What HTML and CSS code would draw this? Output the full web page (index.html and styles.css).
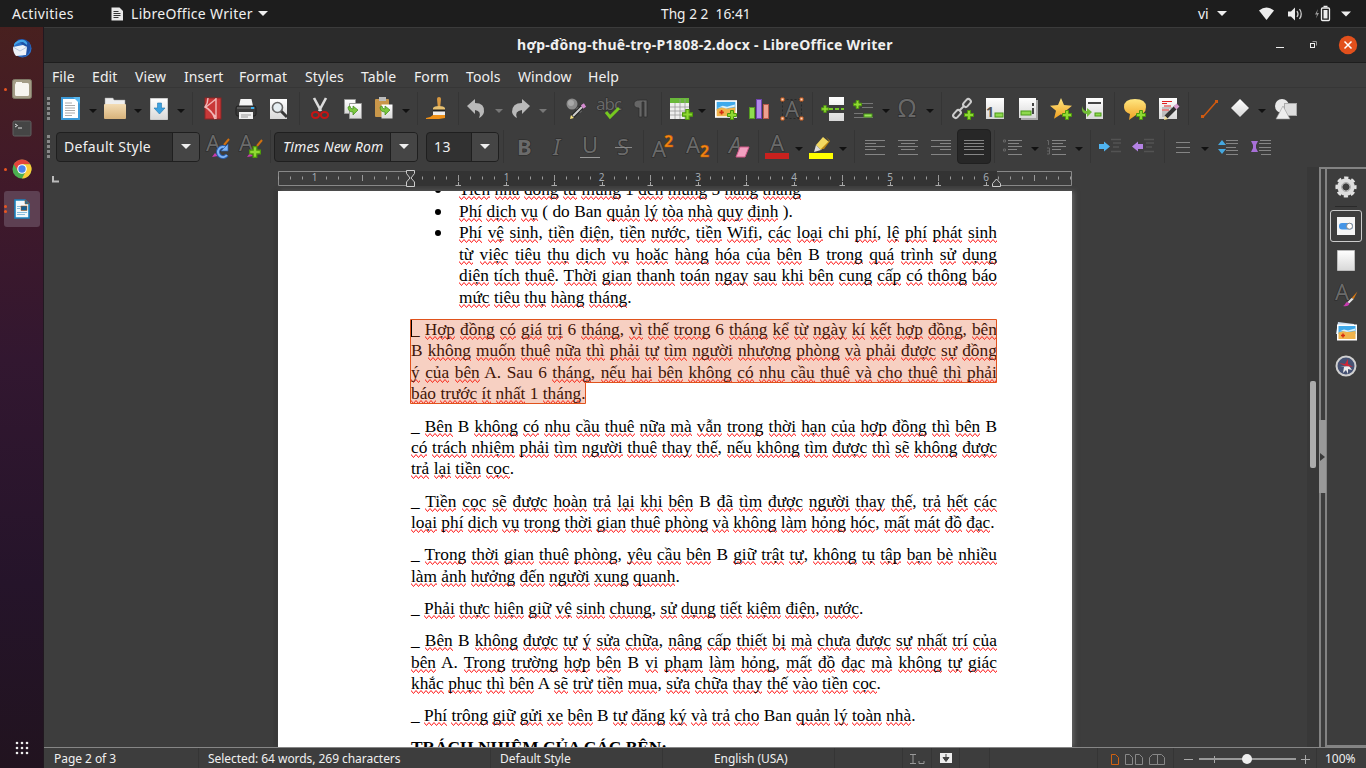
FILE: index.html
```html
<!DOCTYPE html>
<html lang="vi">
<head>
<meta charset="utf-8">
<title>hợp-đồng-thuê-trọ-P1808-2.docx - LibreOffice Writer</title>
<link rel="stylesheet" href="styles.css">
</head>
<body>
<svg width="0" height="0" class="defs">
  <defs>
    <linearGradient id="paper" x2="0" y2="1"><stop stop-color="#fff"/><stop offset="1" stop-color="#d8d8d8"/></linearGradient>
    <linearGradient id="gold" x2="0" y2="1"><stop stop-color="#ffe680"/><stop offset="1" stop-color="#f0a020"/></linearGradient>
    <linearGradient id="tan" x2="0" y2="1"><stop stop-color="#f3dcb4"/><stop offset="1" stop-color="#d7b27a"/></linearGradient>
    <symbol id="plus" viewBox="0 0 10 10"><path d="M3.5.5h3v3h3v3h-3v3h-3v-3h-3v-3h3z" fill="#8fd932" stroke="#4d9a0a"/></symbol>
    <symbol id="brush" viewBox="0 0 14 14"><path d="M13.5 0L8 6l2 1z" fill="#d97a14"/><path d="M8 6L4 10l2 1 4-4z" fill="#e4e4e4"/><path d="M4 10c-2 0-1 2-4 3.500 3 .5 6 0 6-2.500z" fill="#c83cb0"/></symbol>
    <symbol id="beach" viewBox="0 0 20 16"><rect width="20" height="16" fill="#fff"/><rect x="1.500" y="1.500" width="17" height="8" fill="#3fa9ea"/><path d="M1.500 8l5-1.500 5 1 7-1V14.500h-17z" fill="#f0b44c"/><path d="M2 7l5-2 4 1 7-2v2l-8 1.500-4-1z" fill="#d8f0fa"/><path d="M6 9v4M4 11h4" stroke="#d42c10" stroke-width="1.500"/></symbol>
    <pattern id="ticks" x="132" y="0" width="96" height="20" patternUnits="userSpaceOnUse"><path d="M12.500 6.500v3M24.500 6.500v3M36.500 6.500v3M48.500 5v6M60.500 6.500v3M72.500 6.500v3M84.500 6.500v3" stroke="#999"/></pattern>
    <pattern id="tabs" x="132" y="0" width="48" height="20" patternUnits="userSpaceOnUse"><path d="M46 15.500h4M0 15.500h3M.5 12v4M45.500 15.500h3" stroke="#aaa"/></pattern>
  </defs>
</svg>

<header class="topbar">
  <span class="activities">Activities</span>
  <svg class="appicon" width="12" height="14"><path d="M.5.5h8L12 4v9.500H.5z" fill="#e8e8e8"/><path d="M2.500 4.500h5M2.500 6.500h7M2.500 8.500h7M2.500 10.500h5" stroke="#333"/></svg>
  <span class="appname">LibreOffice Writer</span>
  <i class="tri light"></i>
  <span class="clock">Thg 2 2&nbsp; 16:41</span>
  <span class="lang">vi</span>
  <i class="tri light"></i>
  <svg class="tray" width="104" height="18">
    <path d="M0 5.500Q7.500-.5 15 5.500L7.500 15z" fill="#eee"/>
    <path d="M29 6.500h3l4-4v13l-4-4h-3z" fill="#eee"/><path d="M38 6q2 3 0 6M40.500 4q3.500 5 0 10" fill="none" stroke="#ccc" stroke-width="1.300"/>
    <path d="M59 4l-3 5.500h2l-1 4 3-5.500h-2z" fill="#999"/><rect x="62.500" y="3" width="8" height="12.500" rx="1" fill="none" stroke="#eee" stroke-width="1.300"/><path d="M64.500 1.500h4" stroke="#eee" stroke-width="1.500"/><rect x="64.500" y="5" width="4" height="8.500" fill="#eee"/>
    <path d="M82 6.500h10l-5 5z" fill="#eee"/>
  </svg>
</header>

<div class="desktop">
  <nav class="dock">
    <div class="launch"><svg width="22" height="22"><circle cx="11.500" cy="10.500" r="9" fill="#2a70c8"/><path d="M6 2q7-3 12 2 4 6-2 13-2 2-5 2 6-6 1-12z" fill="#1e50a4"/><path d="M3 6q4-5 10-4 4 2 3 5l-4-3q-5 0-9 4z" fill="#42a4e8"/><path d="M2 9l10-2 4 2-1 8-10 1q-3-3-3-9z" fill="#edf2f8"/><path d="M2 9l7 4 7-4" fill="none" stroke="#b8c8dc"/></svg></div>
    <div class="launch one"><svg width="20" height="20"><rect x=".5" y=".5" width="19" height="19" rx="2" fill="#a39c86" stroke="#7f7967"/><rect x="3" y="4" width="14" height="13" rx="1.500" fill="#f6f4ef"/><path d="M4 3h6v2H4z" fill="#f6f4ef"/></svg></div>
    <div class="launch"><svg width="20" height="18"><rect x="1" y="1" width="18" height="15" rx="1.500" fill="#454545" stroke="#606060"/><path d="M3 4l2.500 1.500L3 7M6 8h4" fill="none" stroke="#ddd"/></svg></div>
    <div class="launch one"><svg width="20" height="20" viewBox="-10 -10 20 20"><circle r="9.500" fill="#4caf50"/><path d="M-8.200-4.800A9.500 9.500 0 0 1 8.200-4.800H0L-4 2z" fill="#e5443b"/><path d="M8.200-4.800A9.500 9.500 0 0 1 0 9.500L4 2 0-4.800z" fill="#fccc38"/><circle r="4.800" fill="#fff"/><circle r="3.700" fill="#4a84ee"/></svg></div>
    <div class="launch two active"><svg width="16" height="20"><path d="M1 1h10l4 4v14H1z" fill="#f2f8fc" stroke="#1b83bf" stroke-width="1.600"/><path d="M11 1v4h4z" fill="#1570a8"/><path d="M3 7.500h4M3 9.500h3M3 13.500h10M3 15.500h8" stroke="#1b83bf"/><rect x="7" y="7" width="6" height="4.500" fill="#165f92"/></svg></div>
    <svg class="apps" width="14" height="14"><g fill="#eee"><circle cx="2" cy="2" r="1.300"/><circle cx="7" cy="2" r="1.300"/><circle cx="12" cy="2" r="1.300"/><circle cx="2" cy="7" r="1.300"/><circle cx="7" cy="7" r="1.300"/><circle cx="12" cy="7" r="1.300"/><circle cx="2" cy="12" r="1.300"/><circle cx="7" cy="12" r="1.300"/><circle cx="12" cy="12" r="1.300"/></g></svg>
  </nav>

  <main class="window">
    <div class="titlebar">
      <b>hợp-đồng-thuê-trọ-P1808-2.docx - LibreOffice Writer</b>
      <svg class="winctl" width="84" height="20"><path d="M1 12.500h8" stroke="#eee"/><path d="M37.500 6.500h4v4" fill="none" stroke="#999"/><rect x="35.500" y="8.500" width="4" height="4" fill="none" stroke="#eee"/><circle cx="73" cy="10" r="9.200" fill="#e2501c"/><path d="M69.500 6.500l7 7M76.500 6.500l-7 7" stroke="#fff" stroke-width="1.500"/></svg>
    </div>
    <nav class="menubar"><span>File</span><span>Edit</span><span>View</span><span>Insert</span><span>Format</span><span>Styles</span><span>Table</span><span>Form</span><span>Tools</span><span>Window</span><span>Help</span></nav>

    <div class="toolbar standard">
      <i class="grip"></i>
      <svg class="ic"><rect x="3" y="1" width="17" height="21" fill="#fff" stroke="#3c9ad8" stroke-width="2"/><path d="M14 0h7v7z" fill="#58b8f0"/><path d="M6 6h7M6 8.500h10M6 11h10M6 13.500h10M6 16h10M6 18.500h7" stroke="#aaa"/></svg>
      <i class="tri"></i>
      <svg class="ic"><path d="M2 4V1h8l1 2h11v6H2z" fill="#eee" stroke="#999" stroke-width=".5"/><rect x="1" y="7" width="22" height="15" rx="1" fill="url(#tan)"/></svg>
      <i class="tri"></i>
      <svg class="ic"><path d="M3.500 1.500h17v21h-17z" fill="url(#paper)" stroke="#ccc"/><path d="M10.500 6h4v5h3.500l-5.500 6-5.500-6h3.500z" fill="#3ea2e0" stroke="#2478b0" stroke-width=".6"/></svg>
      <i class="tri"></i><i class="sep"></i>
      <svg class="ic"><rect x="4" y="1" width="16" height="21" fill="#c93838" stroke="#8e2424"/><path d="M7 1q0 5-3 9 7 3 10 12M15 1v21M15 2L5 10l10 10" stroke="#f0b8b8" fill="none" stroke-width="1.400"/></svg>
      <svg class="ic"><path d="M5 9L6.500 2h11L19 9z" fill="#f4f4f4"/><rect x="2" y="9" width="20" height="10" rx="2" fill="#3a3a3a" stroke="#202020"/><path d="M3 11h18" stroke="#777"/><rect x="17" y="10" width="3" height="2" fill="#38b0f0"/><path d="M5 15h14v7H5z" fill="#f0f0f0"/><path d="M7 18h10M7 20h7" stroke="#999"/></svg>
      <svg class="ic"><rect x="3" y="2" width="17" height="20" fill="url(#paper)"/><path d="M14 14l6 6" stroke="#383838" stroke-width="3"/><circle cx="10.500" cy="10.500" r="5" fill="#e6eef2" stroke="#666" stroke-width="1.600"/></svg>
      <i class="sep"></i>
      <svg class="ic"><path d="M6 1l7 13M18 1l-7 13" stroke="#dcdcdc" stroke-width="2.600"/><ellipse cx="7.500" cy="18" rx="3.600" ry="3" fill="none" stroke="#c41414" stroke-width="2"/><ellipse cx="16.500" cy="18" rx="3.600" ry="3" fill="none" stroke="#c41414" stroke-width="2"/></svg>
      <svg class="ic"><g fill="url(#paper)" stroke="#999"><path d="M3.500 2.500h11v14h-11z"/><path d="M8.500 6.500h12v15h-12z"/></g><path d="M7 10q0 5 5 5v3l5-5-5-4v3q-3 0-3-3z" fill="#7cc840" stroke="#3f8a18" stroke-width=".7"/></svg>
      <svg class="ic"><rect x="3" y="2" width="14" height="18" rx="1" fill="#c9974a"/><rect x="7" y="0" width="7" height="4" fill="#bbb"/><path d="M9.500 7.500h11v14h-11z" fill="url(#paper)"/><path d="M8 10q0 5 5 5v3l5-5-5-4v3q-3 0-3-3z" fill="#7cc840" stroke="#3f8a18" stroke-width=".7"/></svg>
      <i class="tri"></i><i class="sep"></i>
      <svg class="ic"><path d="M13 0q2 0 2 2l-.8 8h-2.400L11 2q0-2 2-2z" fill="#d89840"/><path d="M7 11q1-2 6-2t6 2v2H7z" fill="#e6c070"/><path d="M7 12.500h12v2H7z" fill="#222"/><path d="M7 14.500h12v4H7z" fill="#eee"/><path d="M0 21q4 0 7-3h12v3l-6 1H0z" fill="#ee9018"/></svg>
      <i class="sep"></i>
      <svg class="ic"><path d="M3 9l8-7v4q10 0 9 9-1 4-5 6 3-7-4-8v4z" fill="#b9b9b9"/></svg>
      <i class="tri dim"></i>
      <svg class="ic"><path d="M21 9l-8-7v4Q3 6 3 15q1 4 5 6-3-7 5-8v4z" fill="#b9b9b9"/></svg>
      <i class="tri dim"></i><i class="sep"></i>
      <svg class="ic"><circle cx="7" cy="7" r="5.500" fill="#8b8b8b"/><circle cx="6" cy="6" r="3" fill="#a8a8a8"/><path d="M12 11l4 4" stroke="#777" stroke-width="3"/><path d="M7 20L18 9" stroke="#222" stroke-width="4"/><path d="M8 19L17 10" stroke="#ccc" stroke-width="2"/><path d="M17 10l3-2" stroke="#d48ad0" stroke-width="4"/><path d="M5 22l1-4 3 3z" fill="#f4e080"/></svg>
      <svg class="ic"><text x="-1" y="13" class="abc">abc</text><path d="M9 15l4 5 9-9" fill="none" stroke="#76c820" stroke-width="3"/></svg>
      <svg class="ic"><path d="M18 3v17h-3V5h-2v15h-3v-9Q5 11 5 7t6-4z" fill="#666" stroke="#2c2c2c" stroke-width=".7"/></svg>
      <i class="sep"></i>
      <svg class="ic"><rect x="1" y="2" width="19" height="20" fill="#eee"/><rect x="1" y="1" width="19" height="5" fill="#69b83a"/><path d="M1 10h19M1 14h19M1 18h19M6 6v16M11 2v20M16 2v20" stroke="#999" stroke-width=".8"/><use href="#plus" x="13" y="12" width="11" height="11"/></svg>
      <i class="tri"></i>
      <svg class="ic"><use href="#beach" x="1" y="3" width="22" height="18"/><use href="#plus" x="13" y="13" width="10" height="10"/></svg>
      <svg class="ic"><rect x="2.500" y="10.500" width="5" height="11" fill="#90dc50" stroke="#559b20"/><rect x="9.500" y="2.500" width="5" height="19" fill="#b28ae8" stroke="#7044b0"/><rect x="16.500" y="7.500" width="5" height="14" fill="#eca090" stroke="#b85848"/></svg>
      <svg class="ic"><rect x="2.500" y="2.500" width="19" height="19" fill="none" stroke="#292929" stroke-dasharray="2 2"/><text x="5" y="20" class="glyph">A</text><g fill="#ffd8c0" stroke="#d06020"><path d="M1 1h3v3H1zM20 1h3v3h-3zM1 20h3v3H1zM20 20h3v3h-3z"/></g></svg>
      <i class="sep"></i>
      <svg class="ic"><path d="M8 0h15v8H8zM8 16h15v8H8z" fill="url(#paper)"/><path d="M8 12h15" stroke="#76c828" stroke-width="2" stroke-dasharray="4 2"/><use href="#plus" x="0" y="8" width="8" height="8"/></svg>
      <svg class="ic"><path d="M10 6.500h11M10 10.500h11M2 16.500h9M2 20.500h19" stroke="#777"/><rect x="12" y="17" width="8" height="3" fill="#9be35a" stroke="#4b9a18"/><use href="#plus" x="1" y="3" width="9" height="9"/></svg>
      <i class="tri"></i>
      <svg class="ic"><text x="2" y="20" class="omega">Ω</text></svg>
      <i class="tri"></i><i class="sep"></i>
      <svg class="ic"><g fill="none" stroke="#ccc" stroke-width="2"><rect x="-2.500" y="-4.500" width="5" height="9" rx="2.500" transform="translate(16 6)rotate(42)"/><rect x="-2.500" y="-4.500" width="5" height="9" rx="2.500" transform="translate(6 17)rotate(42)"/><path d="M8 14l5-5"/></g><use href="#plus" x="13" y="13" width="10" height="10"/></svg>
      <svg class="ic"><path d="M3 1h18v21H3z" fill="url(#paper)"/><text x="3" y="20" class="foot">1</text><rect x="12" y="16" width="8" height="4" fill="#8fd94e" stroke="#4b9a18"/></svg>
      <svg class="ic"><path d="M5 3h17v20H5z" fill="#aaa"/><path d="M3 1h17v20H3z" fill="url(#paper)"/><rect x="5" y="14" width="10" height="4" fill="#8fd94e" stroke="#4b9a18"/><path d="M17 6v3M17 11v6" stroke="#444" stroke-width="2"/></svg>
      <svg class="ic"><path d="M12 1l3 7 8 .8-6 5 2 8-7-4.500-7 4.500 2-8-6-5L9 8z" fill="url(#gold)"/><use href="#plus" x="13" y="13" width="10" height="10"/></svg>
      <svg class="ic"><path d="M4 1h17v21H4z" fill="url(#paper)"/><path d="M6 6h13" stroke="#444" stroke-width="2"/><path d="M0 9q1 5 5 5v-3l5 4-5 5v-3q-6 0-5-8z" fill="#71bd36"/><rect x="13" y="16" width="6" height="3" fill="#8fd94e" stroke="#4b9a18"/></svg>
      <i class="sep"></i>
      <svg class="ic"><path d="M12 2q11 0 11 8t-10 8l-7 5 1-6q-6-2-6-7 0-8 11-8z" fill="url(#gold)"/><use href="#plus" x="13" y="13" width="10" height="10"/></svg>
      <svg class="ic"><path d="M2 1h18v21H2z" fill="url(#paper)"/><path d="M5 4.500h10M5 6.500h5M7 9h7M5 13h7" stroke="#e02020"/><path d="M5 11h10M5 15h8M5 17h5M5 19h4" stroke="#999"/><path d="M9 20l10-10" stroke="#333" stroke-width="4"/><path d="M18 11l3-3" stroke="#d8a0d0" stroke-width="4"/><path d="M7 23l1-4 3 3z" fill="#f2df94"/></svg>
      <i class="sep"></i>
      <svg class="ic"><path d="M5 20L19 4" stroke="#d05a10" stroke-width="1.500"/><path d="M3 18h3v3H3zM17 3h3v3h-3z" fill="#d05a10"/></svg>
      <svg class="ic"><path d="M12 2l9 9-9 9-9-9z" fill="url(#paper)"/></svg>
      <i class="tri"></i>
      <svg class="ic"><circle cx="8" cy="9" r="7" fill="#e8e8e8"/><rect x="10.500" y="6.500" width="12" height="12" fill="#ddd" stroke="#aaa"/><path d="M9 9l7 13H2z" fill="#eee" stroke="#999" stroke-width=".6"/></svg>
    </div>

    <div class="toolbar formatting">
      <i class="grip"></i>
      <div class="combo wide style"><span>Default Style</span><i><b class="tri light"></b></i></div>
      <svg class="ic"><text x="0" y="16" class="glyph">A</text><path d="M23 4l-5 6" stroke="#d07010" stroke-width="2"/><path d="M6 22l3-4 3 3z" fill="#c83cb0"/><path d="M20 13a5 5 0 1 0 1 7" fill="none" stroke="#2c5fae" stroke-width="4"/><path d="M20 13a5 5 0 1 0 1 7" fill="none" stroke="#7fb4f4" stroke-width="2"/><path d="M15 16h7V9z" fill="#7fb4f4" stroke="#2c5fae" stroke-width=".7"/></svg>
      <svg class="ic"><text x="0" y="16" class="glyph">A</text><path d="M23 5l-5 6" stroke="#d07010" stroke-width="2"/><path d="M8 22l3-4 3 3z" fill="#c83cb0"/><use href="#plus" x="10" y="11" width="12" height="12"/></svg>
      <i class="sep"></i>
      <div class="combo wide font"><span>Times New Roman</span><i><b class="tri light"></b></i></div>
      <div class="combo size"><span>13</span><i><b class="tri light"></b></i></div>
      <i class="sep"></i>
      <svg class="ic"><text x="5" y="20" class="glyph bold">B</text></svg>
      <svg class="ic"><text x="8" y="20" class="glyph ital">I</text></svg>
      <svg class="ic"><text x="4" y="18" class="glyph">U</text><path d="M2 22.500h20" stroke="#999"/></svg>
      <svg class="ic"><text x="6" y="20" class="glyph">S</text><path d="M4 12.500h17" stroke="#888"/></svg>
      <i class="sep"></i>
      <svg class="ic"><text x="1" y="22" class="glyph">A</text><text x="13" y="12" class="two">2</text></svg>
      <svg class="ic"><text x="0" y="18" class="glyph">A</text><text x="14" y="22" class="two">2</text></svg>
      <i class="sep"></i>
      <svg class="ic"><text x="2" y="18" class="glyph ital">A</text><path d="M13 12h9l-4 10H9z" fill="#f2a0c0" stroke="#d05888"/></svg>
      <i class="sep"></i>
      <svg class="ic"><text x="5" y="16" class="glyph">A</text><path d="M0 18h24v6H0z" fill="#c9211e"/></svg>
      <i class="tri"></i>
      <svg class="ic"><path d="M7 10L14 2l6 5-8 8z" fill="#f2d860"/><path d="M17 2l3 4-8 8 3 0 6-8z" fill="#b98512"/><path d="M7 10l5 5-7 2z" fill="#ddd"/><path d="M0 18h24v6H0z" fill="#ff0"/></svg>
      <i class="tri"></i><i class="sep"></i>
      <svg class="ic"><path d="M2 5.500h20M2 8.500h11M2 11.500h20M2 14.500h11M2 19.500h20" class="ln"/></svg>
      <svg class="ic"><path d="M2 5.500h20M5 8.500h14M2 11.500h20M5 14.500h14M2 19.500h20" class="ln"/></svg>
      <svg class="ic"><path d="M2 5.500h20M11 8.500h11M2 11.500h20M11 14.500h11M2 19.500h20" class="ln"/></svg>
      <div class="pressed"><svg class="ic"><path d="M2 5.500h20M2 8.500h20M2 11.500h20M2 14.500h20M2 19.500h20" class="ln"/></svg></div>
      <i class="sep"></i>
      <svg class="ic"><path d="M8 5.500h14M8 8.500h11M8 11.500h14M8 14.500h9M8 19.500h14" class="ln"/><path d="M3.500 5h2v2h-2zM3.500 14h2v2h-2z" class="ln dark"/></svg>
      <i class="tri"></i>
      <svg class="ic"><path d="M8 5.500h14M8 8.500h11M8 11.500h14M8 14.500h9M8 19.500h14" class="ln"/><path d="M3 5.500h1.500V10M3 13h2.500v6H3M3 16h2" class="ln dark"/></svg>
      <i class="tri"></i><i class="sep"></i>
      <svg class="ic"><path d="M12 4.500h10M14 8h8M14 12h6M12 16.500h10" stroke="#535353" stroke-width="1.500"/><path d="M0 9h5V6.500l6 5-6 5V14H0z" fill="#50b4f0"/></svg>
      <svg class="ic"><path d="M12 4.500h10M14 8h8M14 12h6M12 16.500h10" stroke="#535353" stroke-width="1.500"/><path d="M11 9H6V6.500l-6 5 6 5V14h5z" fill="#b482e4"/></svg>
      <i class="sep"></i>
      <svg class="ic"><path d="M5 7.500h14M5 12.500h14M5 17.500h14" class="ln"/></svg>
      <i class="tri"></i>
      <svg class="ic"><path d="M10 5.500h12M10 8.500h12M10 12.500h10M10 15.500h12M10 19.500h12" class="ln"/><path d="M6 5l4 5H2zM6 19l4-5H2z" fill="#45a8e0"/></svg>
      <svg class="ic"><path d="M11 5.500h11M10 8.500h12M10 12.500h12M10 15.500h12M12 19.500h10" class="ln"/><path d="M2 6h7l-2 4v3l2 4H2l2-4v-3z" fill="#a870d8"/></svg>
    </div>

    <section class="workspace">
      <div class="canvas">
        <div class="rulerrow">
          <svg width="9" height="7" class="tabsel"><path d="M1 0v5.500h6" fill="none" stroke="#bbb" stroke-width="2"/></svg>
          <svg class="ruler" width="796" height="20">
            <rect x="132" y="1" width="587" height="15" fill="#333"/>
            <path d="M132 1.500H.5v14H132M719 1.500h74.500v14H719" fill="none" stroke="#888"/>
            <rect x="0" y="0" width="794" height="20" fill="url(#ticks)"/>
            <rect x="150" y="0" width="564" height="20" fill="url(#tabs)"/>
            <g class="nums"><text x="36.500" y="11">1</text><text x="228.500" y="11">1</text><text x="323.500" y="11">2</text><text x="420" y="11">3</text><text x="516" y="11">4</text><text x="612" y="11">5</text><text x="708" y="11">6</text></g>
            <path d="M128.500.5h8v3L133 8l3.500 4v4.500h-8V12L132 8l-3.500-4.500z" fill="#3d3d3d" stroke="#ccc"/>
            <path d="M714.500 16.500v-3l4-4.500 4 4.500v3z" fill="#3d3d3d" stroke="#ccc"/>
          </svg>
        </div>
        <article class="page" id="page">
          <ul>
            <li><p class="last">Tiền nhà đóng từ mùng 1 đến mùng 5 hàng tháng</p></li>
            <li><p class="last">Phí dịch vụ ( do Ban quản lý tòa nhà quy định ).</p></li>
            <li><p>Phí vệ sinh, tiền điện, tiền nước, tiền Wifi, các loại chi phí, lệ phí phát sinh</p>
              <p>từ việc tiêu thụ dịch vụ hoặc hàng hóa của bên B trong quá trình sử dụng</p>
              <p>diện tích thuê. Thời gian thanh toán ngay sau khi bên cung cấp có thông báo</p>
              <p class="last">mức tiêu thụ hàng tháng.</p></li>
          </ul>
          <div class="para selected">
            <p>_ Hợp đồng có giá trị 6 tháng, vì thế trong 6 tháng kể từ ngày kí kết hợp đồng, bên</p>
            <p>B không muốn thuê nữa thì phải tự tìm người nhượng phòng và phải được sự đồng</p>
            <p>ý của bên A. Sau 6 tháng, nếu hai bên không có nhu cầu thuê và cho thuê thì phải</p>
            <p class="last">báo trước ít nhất 1 tháng.</p>
            <svg class="selection" width="588" height="86"><path d="M.5.500h586v63H175.500v21H.5z"/><path d="M1.500 1v17" class="caret"/></svg>
          </div>
          <div class="para">
            <p>_ Bên B không có nhu cầu thuê nữa mà vẫn trong thời hạn của hợp đồng thì bên B</p>
            <p>có trách nhiệm phải tìm người thuê thay thế, nếu không tìm được thì sẽ không được</p>
            <p class="last">trả lại tiền cọc.</p>
          </div>
          <div class="para">
            <p>_ Tiền cọc sẽ được hoàn trả lại khi bên B đã tìm được người thay thế, trả hết các</p>
            <p class="last">loại phí dịch vụ trong thời gian thuê phòng và không làm hỏng hóc, mất mát đồ đạc.</p>
          </div>
          <div class="para">
            <p>_ Trong thời gian thuê phòng, yêu cầu bên B giữ trật tự, không tụ tập bạn bè nhiều</p>
            <p class="last">làm ảnh hưởng đến người xung quanh.</p>
          </div>
          <div class="para"><p class="last">_ Phải thực hiện giữ vệ sinh chung, sử dụng tiết kiệm điện, nước.</p></div>
          <div class="para">
            <p>_ Bên B không được tự ý sửa chữa, nâng cấp thiết bị mà chưa được sự nhất trí của</p>
            <p>bên A. Trong trường hợp bên B vi phạm làm hỏng, mất đồ đạc mà không tự giác</p>
            <p class="last loose">khắc phục thì bên A sẽ trừ tiền mua, sửa chữa thay thế vào tiền cọc.</p>
          </div>
          <div class="para"><p class="last">_ Phí trông giữ gửi xe bên B tự đăng ký và trả cho Ban quản lý toàn nhà.</p></div>
          <div class="para"><p class="last heading">TRÁCH NHIỆM CỦA CÁC BÊN:</p></div>
        </article>
      </div>
      <div class="scroll"><i></i></div>
      <div class="splitter"><i><b></b></i></div>
      <aside class="sidebar">
        <svg width="24" height="24" viewBox="-12 -12 24 24"><circle r="8.800" fill="none" stroke="#e2e2e2" stroke-width="3.600" stroke-dasharray="4 2.910" stroke-dashoffset="2"/><circle r="6.200" fill="none" stroke="#ddd" stroke-width="5"/><circle r="4.500" fill="none" stroke="#aaa" stroke-width="1"/></svg>
        <hr>
        <div class="tabon"><svg width="20" height="20"><path d="M1 1h18v18H1z" fill="#f5f5f5"/><rect x="3" y="7" width="14" height="6.500" rx="3" fill="#4595e6"/><circle cx="13.500" cy="10.200" r="3" fill="#fff" stroke="#888"/></svg></div>
        <svg width="24" height="24"><path d="M3.500 1.500h17v20h-17z" fill="url(#paper)" stroke="#bbb"/></svg>
        <svg width="24" height="24"><text x="1" y="16" class="glyph">A</text><use href="#brush" x="9" y="7" width="15" height="16"/></svg>
        <svg width="24" height="24"><path d="M4 3l16 2v10H2z" fill="#cde"/><use href="#beach" x="3" y="5" width="20" height="17"/></svg>
        <svg width="24" height="24" viewBox="-12 -12 24 24"><circle r="9.500" fill="#465273" stroke="#d0d0d0" stroke-width="2"/><path d="M-6 1l4 0-1 6 3-3 2 4 0-5 4 1-3-4z" fill="#eee"/><path d="M-7-3l6 1 3-5 0 5 5 3-7-1-3-1z" fill="#d02838"/></svg>
      </aside>
    </section>

    <footer class="status">
      <span class="s1">Page 2 of 3</span><span class="s2">Selected: 64 words, 269 characters</span><span class="s3">Default Style</span><span class="s4">English (USA)</span>
      <span></span>
      <span><svg width="24" height="14"><path d="M7 2.500h6M7 11.500h6M10 3v9M16 9v2.500h5V9" fill="none" stroke="#999"/></svg></span>
      <span><svg width="24" height="14"><rect x="8" y="1" width="12" height="10" fill="#eee"/><path d="M14 2v5M11 5.500l3 4 3-4z" fill="#444" stroke="#444"/></svg></span>
      <span></span><span></span>
      <span><svg width="70" height="16"><path d="M13.500 3.500h4l3 3v7h-7z" fill="none" stroke="#d06010"/><path d="M27.500 3.500h4l3 3v7h-7zM37.500 3.500h4l3 3v7h-7zM59.500 13.500h-8v-7l3-3h5zv-10h4l3 3v7z" fill="none" stroke="#888"/></svg></span>
      <span><svg width="138" height="16"><path d="M10 8.500h9M127 8.500h9M131.500 4v9M40.500 5v7" stroke="#aaa"/><path d="M25 8h97" stroke="#999" stroke-width="2"/><circle cx="73" cy="8" r="5" fill="#eee"/></svg></span>
      <span class="s5">100%</span>
    </footer>
  </main>
</div>
<script src="spell.js"></script>
</body>
</html>
```
FILE: styles.css
```css
* { box-sizing: border-box; }
body { margin: 0; width: 1366px; height: 768px; overflow: hidden; background: #3d3d3d; color: #f0f0f0; font-family: "Noto Sans", sans-serif; font-size: 14px; }
i { font-style: normal; }
svg { display: block; flex: none; }
.defs { position: absolute; }

.topbar { display: flex; align-items: center; height: 27px; padding-left: 12px; background: #1d1d1d; line-height: 27px; white-space: nowrap; }
.activities { width: 99px; letter-spacing: .35px; }
.appname { width: 121px; margin-left: 8px; letter-spacing: .3px; }
.topbar .tri { margin-left: 6px; }
.clock { width: 92px; margin-left: 393px; font-size: 13.700px; letter-spacing: .02px; }
.lang { width: 12px; margin-left: 445px; }
.topbar .lang + .tri { margin-left: 7px; }
.tray { margin-left: 32px; }

.tri { width: 0; height: 0; border: 4px solid transparent; border-width: 4px 4px 0; border-top-color: #111; }
.tri.dim { border-top-color: #777; }
.tri.light { border-width: 5px 5px 0; border-top-color: #eee; }

.desktop { display: flex; height: 741px; }
.dock { width: 44px; height: 741px; padding: 4px 4px 13px; display: flex; flex-direction: column; align-items: center; gap: 4px; background: linear-gradient(#48201f, #40192a 22%, #321730 45%, #25142a 75%, #21131f); border-right: 1px solid #211820; }
.launch { position: relative; width: 36px; height: 36px; flex: none; display: grid; place-items: center; border-radius: 3px; }
.launch.active { background: #5d4052; }
.launch.one::before, .launch.two::before { content: ""; position: absolute; left: 0; top: 16.500px; width: 3px; height: 3px; border-radius: 50%; background: #e95420; }
.launch.two::before { top: 14px; box-shadow: 0 5px #e95420; }
.apps { margin-top: auto; }

.window { width: 1322px; height: 741px; display: flex; flex-direction: column; border-top: 1px solid #3b3b3b; }
.titlebar { height: 36px; display: flex; align-items: center; background: #2b2b2b; border-bottom: 1px solid #1e1e1e; }
.titlebar b { margin: -2px 0 0 473px; width: 380px; font-size: 14px; letter-spacing: .28px; white-space: nowrap; }
.winctl { margin-left: 378px; }
.menubar { height: 25px; padding-left: 8px; display: grid; grid-template-columns: 40px 43px 49px 55px 66px 56px 53px 52px 52px 70px auto; line-height: 28px; letter-spacing: .1px; border-bottom: 1px solid #363636; }

.toolbar { display: grid; padding-left: 3px; align-items: center; flex: none; }
.standard { height: 38px; padding-top: 3px; grid-template-columns: 12px 30px 14px 31px 13px 30px 15px 9px 33px 33px 32px 9px 33px 31px 30px 15px 9px 32px 6px 31px 14px 30px 15px 11px 32px 32px 32px 8px 29px 16px 33px 33px 32px 9px 31px 30px 14px 30px 15px 10px 32px 33px 33px 33px 32px 9px 34px 31px 10px 30px 30px 16px auto; }
.formatting { height: 41px; grid-template-columns: 9px 150px 33px 31px 4px 152px 77px 9px 33px 33px 33px 32px 8px 35px 31px 10px 31px 7px 30px 14px 30px 15px 9px 33px 33px 28px 37px 6px 31px 13px 31px 15px 9px 33px 32px 7px 30px 15px 33px auto; }
.toolbar > .tri { margin-top: 4px; }
.ic { width: 24px; height: 24px; overflow: visible; }
.formatting > .ic { margin-top: 1px; }
.sep { width: 1px; height: 33px; background: #353535; }
.grip { width: 3px; height: 23px; background: repeating-linear-gradient(#8a8a8a 0 3px, transparent 3px 5px); }
.combo { display: flex; height: 30px; border: 1px solid #1f1f1f; border-radius: 4px; background: #313131; overflow: hidden; line-height: 28px; }
.combo.wide { width: 144px; }
.combo.size { width: 73px; }
.combo span { flex: 1; min-width: 0; overflow: hidden; white-space: nowrap; margin-left: 7px; }
.combo > i { width: 27px; display: grid; place-items: center; border-left: 1px solid #1f1f1f; background: #454545; }
.combo.font span { font-style: italic; font-size: 14px; letter-spacing: .18px; margin: 0 6px 0 8px; }
.combo.style span { letter-spacing: .3px; }
.combo.size span { letter-spacing: .4px; }
.pressed { width: 34px; height: 35px; display: grid; place-items: center; border: 1px solid #202020; border-radius: 4px; background: #272727; }
.ln { stroke: #858585; fill: none; }
.ln.dark { stroke: #666; }
.glyph { font: 22px "Noto Sans", sans-serif; fill: #6a6a6a; stroke: #282828; stroke-width: 1.200px; paint-order: stroke; }
.glyph.bold { font-weight: bold; }
.glyph.ital { font-style: italic; }
.abc { font: 17px "Noto Sans", sans-serif; letter-spacing: -1px; fill: #686868; stroke: #2a2a2a; stroke-width: 1px; paint-order: stroke; }
.omega { font: 25px "Noto Sans", sans-serif; fill: #686868; stroke: #2a2a2a; stroke-width: 1.200px; paint-order: stroke; }
.foot { font: bold 14px "Noto Sans", sans-serif; fill: #555; }
.two { font: bold 16px "Noto Sans", sans-serif; fill: #f68a14; stroke: #b65000; stroke-width: .5px; }

.workspace { height: 580px; flex: none; display: flex; }
.canvas { width: 1263px; height: 580px; overflow: hidden; }
.rulerrow { height: 24px; display: flex; padding-top: 3px; }
.tabsel { margin: 6px 0 0 8px; }
.ruler { margin-left: 217px; }
.nums { font: 10px "Noto Sans", sans-serif; fill: #a4acb4; text-anchor: middle; }
.page { width: 794px; height: 556px; margin-left: 234px; padding: 0 75px 0 133px; overflow: hidden; background: #fff; color: #000; box-shadow: 2px 0 5px #686868, -2px 0 4px #303030; font-family: "Liberation Serif", serif; font-size: 17.330px; }
.page ul { list-style: none; margin: -11.700px 0 10.700px; padding: 0 0 0 48px; }
.page li { position: relative; }
.page li::before { content: ""; position: absolute; left: -24px; top: 8px; width: 6px; height: 6px; border-radius: 50%; background: #000; }
.page p { margin: 0; height: 21.490px; line-height: 21.490px; white-space: nowrap; text-align: justify; text-align-last: justify; }
.page p.last { text-align-last: left; }
.page p.loose { word-spacing: .15px; }
.page p.heading { font-weight: bold; }
.para { position: relative; margin-bottom: 10.680px; }
.miss { padding-bottom: 1px; background: url("data:image/svg+xml,%3Csvg xmlns='http://www.w3.org/2000/svg' width='5' height='4'%3E%3Cpath d='M-2.500 3.500L0 .5 2.500 3.500 5 .5 7.500 3.500' fill='none' stroke='%23f00' stroke-width='.9'/%3E%3C/svg%3E") repeat-x left bottom; }
.selection { position: absolute; left: -1px; top: 0; fill: rgba(224, 82, 28, .27); stroke: #e0521c; }
.selection .caret { stroke: #000; }

.scroll { width: 12px; padding: 214px 0 0 3px; background: #383838; }
.scroll i { display: block; width: 6px; height: 87px; border-radius: 2px; background: #acacac; }
.splitter { width: 8px; padding-top: 251px; border: solid #838383; border-width: 2px 2px 0; }
.splitter i { display: grid; place-items: center; width: 7px; height: 73px; margin-left: -2px; background: #999; }
.splitter b { border: 4px solid transparent; border-width: 4px 0 4px 5px; border-left-color: #3a3a3a; }
.sidebar { width: 39px; display: flex; flex-direction: column; align-items: center; border-top: 2px solid #838383; border-bottom: 2px solid #838383; padding: 6px 2px 0 0; }
.sidebar hr { width: 22px; height: 1px; margin: 7px 0 3px; border: 0; background: #2a2a2a; }
.sidebar > svg + svg { margin-top: 11px; }
.tabon { width: 32px; height: 32px; display: grid; place-items: center; border: 1px solid #ccc; border-radius: 3px; margin-bottom: 7px; }

.status { height: 21px; display: grid; grid-template-columns: 155px 292px 172px 172px 68px 29px 28px 30px 108px 76px 143px auto; border-top: 1px solid #868686; line-height: 22px; font-size: 12px; white-space: nowrap; letter-spacing: -.05px; }
.status > span { border-right: 1px solid #353535; display: flex; align-items: center; }
.status > span:last-child { border: 0; }
.s1 { padding-left: 10px; }
.s2 { padding-left: 9px; }
.s3 { padding-left: 9px; }
.s4 { padding-left: 51px; }
.s5 { padding-left: 8px; }
```
FILE: spell.js
```js
// Mark every word the English dictionary does not know.
const known = new Set(['_', 'B', 'A', '1', '5', '6', 'do', 'Ban', 'chi', 'Sau', '(', ')']);
document.querySelectorAll('#page p:not(.heading)').forEach(line => {
  const parts = line.textContent.split(' ');
  line.textContent = '';
  parts.forEach((part, n) => {
    if (n) line.append(' ');
    const [, word, tail] = part.match(/^(.*?)([.,]*)$/);
    if (known.has(word)) { line.append(part); return; }
    const mark = document.createElement('span');
    mark.className = 'miss';
    mark.textContent = word;
    line.append(mark, tail);
  });
});
```
